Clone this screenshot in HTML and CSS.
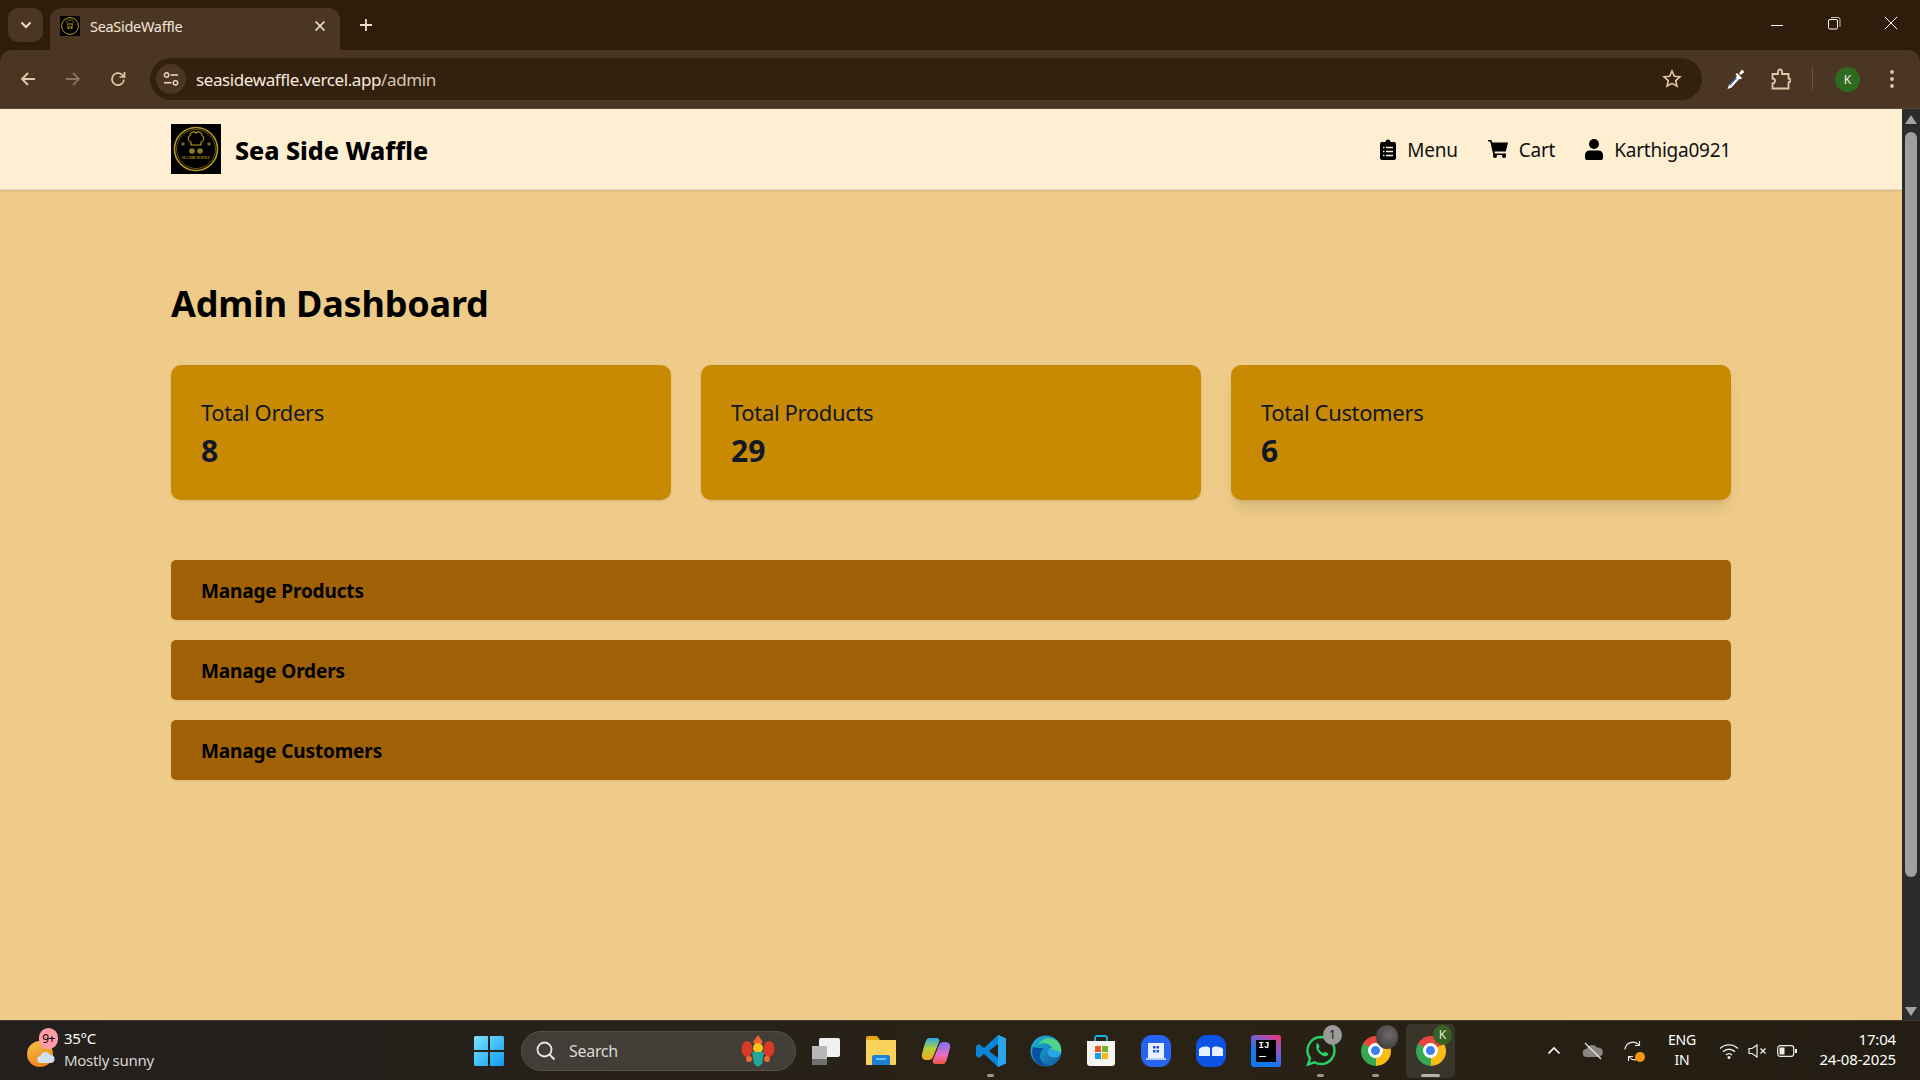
FILE: index.html
```html
<!DOCTYPE html>
<html lang="en">
<head>
<meta charset="utf-8">
<title>SeaSideWaffle</title>
<link rel="stylesheet" href="styles.css">
</head>
<body>
<div class="tabstrip">
  <button class="tab-search"><svg width="12" height="8" viewBox="0 0 12 8"><path d="M1.500 1.500 6 6l4.500-4.500" fill="none" stroke="#f2dfc8" stroke-width="2"/></svg></button>
  <div class="tab">
    <svg class="favicon" viewBox="0 0 50 50"><rect width="50" height="50" fill="#000"/><circle cx="25" cy="25" r="21" fill="none" stroke="#b8991a" stroke-width="2.500"/><path d="M19 20h12v6H19zM17 15a4 4 0 0 1 8-3 4 4 0 0 1 8 3 4 4 0 0 1-2 5H19a4 4 0 0 1-2-5z" fill="none" stroke="#b8991a" stroke-width="1.500"/><circle cx="21" cy="30" r="3" fill="#8d7a1a"/><circle cx="29" cy="30" r="3" fill="#8d7a1a"/></svg>
    <span class="tab-title">SeaSideWaffle</span>
    <svg class="tab-close" width="12" height="12" viewBox="0 0 12 12"><path d="M1.500 1.500l9 9M10.500 1.500l-9 9" stroke="#f2e4d4" stroke-width="1.700"/></svg>
  </div>
  <svg class="tab-new" width="14" height="14" viewBox="0 0 14 14"><path d="M7 1v12M1 7h12" stroke="#f2dfc8" stroke-width="1.800"/></svg>
  <div class="win-controls">
    <svg width="14" height="14" viewBox="0 0 14 14"><path d="M1 9.500h12" stroke="#fff" stroke-width="1"/></svg>
    <svg width="14" height="14" viewBox="0 0 14 14"><rect x="1.500" y="3.500" width="9" height="9.500" rx="1.500" fill="none" stroke="#fff"/><path d="M4 1.500h7a2 2 0 0 1 2 2V11" fill="none" stroke="#c9c2ba"/></svg>
    <svg width="14" height="14" viewBox="0 0 14 14"><path d="M.8.800l12.400 12.400M13.200.800.800 13.200" stroke="#fff" stroke-width="1"/></svg>
  </div>
</div>
<div class="toolbar">
  <svg class="tool" width="18" height="18" viewBox="0 0 18 18"><path d="M16 9H3M9 3 3 9l6 6" fill="none" stroke="#e4c7a8" stroke-width="1.800"/></svg>
  <svg class="tool" width="18" height="18" viewBox="0 0 18 18"><path d="M2 9h13M9 3l6 6-6 6" fill="none" stroke="#8a735c" stroke-width="1.800"/></svg>
  <svg class="tool" width="18" height="18" viewBox="0 0 18 18"><path d="M15 9.500A6 6 0 1 1 13 4.600L15.500 7M15.500 2v5h-5" fill="none" stroke="#e4c7a8" stroke-width="1.700"/></svg>
  <div class="omnibox">
    <span class="site-btn"><svg width="16" height="14" viewBox="0 0 16 14"><circle cx="3.500" cy="3" r="2.200" fill="none" stroke="#f0dcc4" stroke-width="1.400"/><path d="M7.500 3H15M1 10.800h7.500" stroke="#f0dcc4" stroke-width="1.600"/><circle cx="12.500" cy="10.800" r="2.200" fill="none" stroke="#f0dcc4" stroke-width="1.400"/></svg></span>
    <span class="url"><span class="url-host">seasidewaffle.vercel.app</span>/admin</span>
    <svg class="star" width="20" height="20" viewBox="0 0 20 20"><path d="M10 2l2.300 5.300 5.700.5-4.300 3.800 1.300 5.600L10 14.300 5 17.200l1.300-5.600L2 7.800l5.700-.5z" fill="none" stroke="#e4c7a8" stroke-width="1.600"/></svg>
  </div>
  <div class="tool-right">
    <svg width="20" height="22" viewBox="0 0 20 22"><path d="M12 7 3 17l-1.500 4L5.500 19.500l9-10z" fill="#fff"/><path d="M11 10 5.500 16l-2 3 .5-3 5-6.500z" fill="#2d50b4"/><path d="M11 5l5 5-1.500 1.500-5-5zM13 5.500l3-4 2.500 2.500-4 3z" fill="#fff"/></svg>
    <svg width="20" height="22" viewBox="0 0 20 22"><path d="M1.500 6H7V3.500a2 2 0 0 1 4 0V6h6.500v4.500a2 2 0 0 1 0 4V20.500H1.500V15.500a2.500 2.500 0 0 0 0-5z" fill="none" stroke="#e4c7a8" stroke-width="1.800"/></svg>
    <span class="tool-sep"></span>
    <span class="avatar">K</span>
    <svg width="4" height="20" viewBox="0 0 4 20"><circle cx="2" cy="3" r="1.900" fill="#e4c7a8"/><circle cx="2" cy="10" r="1.900" fill="#e4c7a8"/><circle cx="2" cy="17" r="1.900" fill="#e4c7a8"/></svg>
  </div>
</div>

<div class="viewport">
  <div class="page">
    <header class="site-header">
      <div class="brand">
        <svg class="logo" viewBox="0 0 50 50"><rect width="50" height="50" fill="#000"/><circle cx="25" cy="25" r="21.500" fill="none" stroke="#b8991a" stroke-width="1.600"/><circle cx="25" cy="25" r="19.500" fill="none" stroke="#8d7a1a" stroke-width=".7"/><path d="M20 21v-3a3.500 3.500 0 0 1-1-6.500 3.500 3.500 0 0 1 6-2.500 3.500 3.500 0 0 1 6 2.500 3.500 3.500 0 0 1-1 6.500v3z" fill="none" stroke="#b8991a" stroke-width="1.100"/><circle cx="21" cy="27" r="2.800" fill="#8d7a1a"/><circle cx="29" cy="27" r="2.800" fill="#8d7a1a"/><circle cx="12" cy="20" r="1.800" fill="#6e6320"/><circle cx="38" cy="20" r="1.800" fill="#6e6320"/><text x="25" y="35" class="logo-text">SEA SIDE WAFFLE</text></svg>
        <span class="brand-name">Sea Side Waffle</span>
      </div>
      <nav class="nav">
        <a class="nav-link"><svg width="16" height="21" viewBox="0 0 16 21"><path d="M2 3h3.500a2.500 2.500 0 0 1 5 0H14a2 2 0 0 1 2 2v14a2 2 0 0 1-2 2H2a2 2 0 0 1-2-2V5a2 2 0 0 1 2-2z" fill="#000"/><path d="M3 8.500h1.500M6 8.500h7M3 12.500h1.500M6 12.500h7M3 16.500h1.500M6 16.500h7" stroke="#feeed2" stroke-width="1.500"/></svg>Menu</a>
        <a class="nav-link"><svg width="20" height="18" viewBox="0 0 20 18"><path d="M0 0h3.500l.6 2.500H20l-2.200 9H6.500l.4 2H18v1.500H5.300L2.200 1.500H0z" fill="#000"/><circle cx="7" cy="16" r="2" fill="#000"/><circle cx="16" cy="16" r="2" fill="#000"/></svg>Cart</a>
        <a class="nav-link"><svg width="18" height="21" viewBox="0 0 18 21"><circle cx="9" cy="5" r="5" fill="#000"/><path d="M4.500 11.500h9A4.500 4.500 0 0 1 18 16v3a2 2 0 0 1-2 2H2a2 2 0 0 1-2-2v-3a4.500 4.500 0 0 1 4.500-4.500z" fill="#000"/></svg>Karthiga0921</a>
      </nav>
    </header>
    <main class="main">
      <h1 class="title">Admin Dashboard</h1>
      <section class="stats">
        <div class="stat"><div class="stat-label">Total Orders</div><div class="stat-value">8</div></div>
        <div class="stat"><div class="stat-label">Total Products</div><div class="stat-value">29</div></div>
        <div class="stat stat-hover"><div class="stat-label">Total Customers</div><div class="stat-value">6</div></div>
      </section>
      <section class="manage">
        <div class="manage-row">Manage Products</div>
        <div class="manage-row">Manage Orders</div>
        <div class="manage-row">Manage Customers</div>
      </section>
    </main>
  </div>
  <div class="scrollbar">
    <svg class="sb-arrow" width="12" height="9" viewBox="0 0 12 9"><path d="M6 0l6 9H0z" fill="#a3a3a3"/></svg>
    <div class="sb-thumb"></div>
    <svg class="sb-arrow sb-down" width="12" height="9" viewBox="0 0 12 9"><path d="M6 9l6-9H0z" fill="#a3a3a3"/></svg>
  </div>
</div>

<footer class="taskbar">
  <div class="weather">
    <span class="wx-icon">
      <span class="wx-sun"></span>
      <svg class="wx-cloud" width="18" height="12" viewBox="0 0 18 12"><path d="M4 12a3.500 3.500 0 0 1-.5-7A5 5 0 0 1 13 4a4 4 0 0 1 1 8z" fill="#cfe0f2"/></svg>
      <span class="wx-badge">9+</span>
    </span>
    <span class="wx-text"><span class="wx-temp">35°C</span><span class="wx-desc">Mostly sunny</span></span>
  </div>
  <div class="tb-icon"><svg width="30" height="30" viewBox="0 0 30 30"><defs><linearGradient id="win" x1="0" y1="0" x2="1" y2="1"><stop offset="0" stop-color="#7ce3ff"/><stop offset="1" stop-color="#0d9bf5"/></linearGradient></defs><path d="M0 1.500A1.500 1.500 0 0 1 1.500 0H14v14H0zM16 0h12.500A1.500 1.500 0 0 1 30 1.500V14H16zM0 16h14v14H1.500A1.500 1.500 0 0 1 0 28.500zM16 16h14v12.500a1.500 1.500 0 0 1-1.500 1.500H16z" fill="url(#win)"/></svg></div>
  <div class="search">
    <svg width="22" height="22" viewBox="0 0 22 22"><circle cx="9.500" cy="9.500" r="7" fill="none" stroke="#e8e8e8" stroke-width="1.800"/><path d="M14.500 14.500l5 5" stroke="#e8e8e8" stroke-width="2"/></svg>
    <span class="search-text">Search</span>
    <svg class="search-art" width="36" height="32" viewBox="0 0 36 32"><path d="M18 0l5 7-5 5-5-5z" fill="#f0662a"/><ellipse cx="7" cy="14" rx="5.500" ry="8" fill="#d93a25"/><ellipse cx="29" cy="14" rx="5.500" ry="8" fill="#d93a25"/><circle cx="18" cy="13" r="5" fill="#f5c31c"/><path d="M12 17h12l-2 12-4 3-4-3z" fill="#21a69a"/><circle cx="9" cy="24" r="3" fill="#ef6a2c"/><circle cx="27" cy="24" r="3" fill="#ef6a2c"/></svg>
  </div>
  <div class="tb-icon"><svg width="30" height="28" viewBox="0 0 30 28"><rect x="8" y="1" width="21" height="19" rx="2" fill="#f1f1f1"/><rect x="1" y="9" width="15" height="13" fill="#b8b8b8"/><rect x="1" y="22" width="15" height="6" fill="#6f6f6f"/></svg></div>
  <div class="tb-icon"><svg width="32" height="30" viewBox="0 0 32 30"><path d="M1 2a2 2 0 0 1 2-2h9l3 4h-14z" fill="#e5a50c"/><path d="M1 4h30v24a1 1 0 0 1-1 1H2a1 1 0 0 1-1-1z" fill="#fbd35c"/><path d="M7 21a2 2 0 0 1 2-2h14a2 2 0 0 1 2 2v8H7z" fill="#1a80d6"/><path d="M11 23h10" stroke="#8fd0f8" stroke-width="1.600"/></svg></div>
  <div class="tb-icon"><svg width="30" height="30" viewBox="0 0 30 30"><defs><linearGradient id="cp1" x1="0" y1="0" x2="0" y2="1"><stop offset="0" stop-color="#2aa7e8"/><stop offset=".5" stop-color="#b6d233"/><stop offset="1" stop-color="#f5a623"/></linearGradient><linearGradient id="cp2" x1="0" y1="0" x2="0" y2="1"><stop offset="0" stop-color="#7d6ff2"/><stop offset=".6" stop-color="#e86fc1"/><stop offset="1" stop-color="#f2553d"/></linearGradient></defs><path d="M8 2h7c3 0 4 2 3 4l-6 15c-1 2-2 3-4 3H5c-3 0-5-3-4-6l3-11C5 4 6 2 8 2z" fill="url(#cp1)"/><path d="M22 28h-7c-3 0-4-2-3-4l6-15c1-2 2-3 4-3h3c3 0 5 3 4 6l-3 11c-1 3-2 5-4 5z" fill="url(#cp2)"/></svg></div>
  <div class="tb-icon tb-open"><svg width="30" height="32" viewBox="0 0 30 32"><path d="M22 0l8 3.500v25L22 32 8 19l-5 4-3-2v-10l3-2 5 4zM22 9 13 16l9 7z" fill="#0a84d4"/><path d="M22 0l8 3.500v25L22 32z" fill="#2aa4ea"/></svg></div>
  <div class="tb-icon"><svg width="32" height="32" viewBox="0 0 32 32"><defs><linearGradient id="edg" x1="0" y1="0" x2="1" y2="1"><stop offset="0" stop-color="#1fb9d4"/><stop offset="1" stop-color="#0f58a8"/></linearGradient></defs><circle cx="16" cy="16" r="15.500" fill="url(#edg)"/><path d="M31 18c-2 5-8 5-11 3-4-3-2-8 2-8-2-5-9-6-14-3 4-7 12-9 18-5 4 3 6 8 5 13z" fill="#4fd28a"/><path d="M31 18c-2 5-8 5-11 3-3-2-3-5-1-7 4 0 7 1 12 4z" fill="#2aa4ea"/><path d="M3 12c-3 9 3 19 13 19 2 0 4-.5 5-1-6 1-11-3-11-9 0-3 1-6 4-8-4 0-8 0-11-1z" fill="#0b4f9f"/></svg></div>
  <div class="tb-icon"><svg width="30" height="32" viewBox="0 0 30 32"><path d="M9 7V3a2 2 0 0 1 2-2h8a2 2 0 0 1 2 2v4" fill="none" stroke="#1db1e6" stroke-width="1.800"/><path d="M1 6h28v22a3 3 0 0 1-3 3H4a3 3 0 0 1-3-3z" fill="#f6f4f1"/><rect x="9" y="11" width="6" height="6" fill="#e9582b"/><rect x="16" y="11" width="6" height="6" fill="#72b52c"/><rect x="9" y="18" width="6" height="6" fill="#1d9ce6"/><rect x="16" y="18" width="6" height="6" fill="#f6b90e"/></svg></div>
  <div class="tb-icon"><svg width="30" height="32" viewBox="0 0 30 32"><rect width="30" height="32" rx="11" fill="#2563f0"/><path d="M7 8h16v15H7z" fill="#e8f0ff"/><path d="M5 24h20" stroke="#e8f0ff" stroke-width="1.500"/><g fill="#1d50d8"><rect x="12" y="11" width="2.500" height="2.500"/><rect x="15.500" y="11" width="2.500" height="2.500"/><rect x="12" y="15" width="2.500" height="2.500"/><rect x="15.500" y="15" width="2.500" height="2.500"/></g></svg></div>
  <div class="tb-icon"><svg width="30" height="32" viewBox="0 0 30 32"><rect width="30" height="32" rx="11" fill="#0c54e6"/><path d="M3 14c4-3 8-3 11-1v8H3zM16 13c3-2 7-2 11 1v7H16z" fill="#e8f0ff"/></svg></div>
  <div class="tb-icon"><span class="ij"><span class="ij-box"><span class="ij-text">IJ</span><span class="ij-line"></span></span></span></div>
  <div class="tb-icon tb-open">
    <svg width="30" height="32" viewBox="0 0 30 32"><path d="M15 2a13.500 13.500 0 0 1 0 27c-2.500 0-4.500-.6-6.500-1.700L2 29.500l2-6.200A13.500 13.500 0 0 1 15 2z" fill="none" stroke="#25d366" stroke-width="2.400"/><path d="M10 9c1-1 2-1 2.500 0l1 2.500c.2.700-.8 1.500-1 2 .8 2 2.500 3.700 4.500 4.500.500-.3 1.300-1.300 2-1l2.500 1c1 .5 1 1.500 0 2.500-3 3-13.500-3.500-11-11.500z" fill="#25d366"/></svg>
    <span class="tb-badge tb-badge-gray">1</span>
  </div>
  <div class="tb-icon tb-open">
    <span class="chrome"><span class="chrome-eye"></span></span>
    <span class="tb-badge tb-badge-dark"></span>
  </div>
  <div class="tb-icon tb-active">
    <span class="chrome"><span class="chrome-eye"></span></span>
    <span class="tb-badge tb-badge-green">K</span>
  </div>
  <div class="tray">
    <svg width="14" height="9" viewBox="0 0 14 9"><path d="M1.500 7.500 7 2l5.500 5.500" fill="none" stroke="#fff" stroke-width="1.600"/></svg>
    <svg class="tray-cloud" width="22" height="18" viewBox="0 0 22 18"><path d="M5 15a4 4 0 0 1-.5-8A6 6 0 0 1 15 5.500 4.500 4.500 0 0 1 17 15z" fill="#8a8580"/><path d="M3 1l16 16" stroke="#e9e9e9" stroke-width="1.300"/></svg>
    <span class="tray-sync"><svg width="20" height="20" viewBox="0 0 20 20"><path d="M1 8.500A8 8 0 0 1 15 4M19 12a8 8 0 0 1-14 4" fill="none" stroke="#eee" stroke-width="1.100"/><path d="M15.500 0v4.500H11M4.500 20v-4.500H9" fill="none" stroke="#eee" stroke-width="1.100"/></svg><span class="sync-dot"></span></span>
    <span class="lang"><span>ENG</span><span>IN</span></span>
    <svg class="tray-wifi" width="20" height="16" viewBox="0 0 20 16"><path d="M1 5.500a13 13 0 0 1 18 0M4 8.800a8.500 8.500 0 0 1 12 0M7 12a4 4 0 0 1 6 0" fill="none" stroke="#eee" stroke-width="1.400"/><circle cx="10" cy="14.500" r="1.500" fill="#eee"/></svg>
    <svg class="tray-mute" width="20" height="14" viewBox="0 0 20 14"><path d="M1 4.500h3L9 1v12L4 9.500H1z" fill="none" stroke="#eee" stroke-width="1.200"/><path d="M12.500 4.500l5 5M17.500 4.500l-5 5" stroke="#eee" stroke-width="1.300"/></svg>
    <svg class="tray-batt" width="20" height="12" viewBox="0 0 20 12"><rect x=".7" y=".7" width="16" height="10.600" rx="2.500" fill="none" stroke="#eee" stroke-width="1.200"/><rect x="2.500" y="2.500" width="5" height="7" fill="#eee"/><rect x="18" y="4" width="2" height="4" fill="#eee"/></svg>
    <span class="clock"><span>17:04</span><span>24-08-2025</span></span>
  </div>
</footer>
</body>
</html>
```

FILE: styles.css
```css
* { box-sizing: border-box; }
html, body { margin: 0; height: 100%; }
body {
  width: 1920px;
  height: 1080px;
  overflow: hidden;
  display: flex;
  flex-direction: column;
  font-family: "Noto Sans", "Open Sans", "Liberation Sans", sans-serif;
  color: #000;
  background: #2f1c0a;
}
svg { display: block; flex: none; }

/* browser chrome */
.tabstrip {
  height: 50px;
  flex: none;
  display: flex;
  align-items: flex-start;
  background: #2f1c0a;
  padding: 8px 0 0 8px;
}
.tab-search {
  width: 35px;
  height: 34px;
  border: 0;
  padding: 0;
  border-radius: 10px;
  background: #4b3623;
  display: flex;
  align-items: center;
  justify-content: center;
}
.tab {
  width: 290px;
  height: 42px;
  margin-left: 7px;
  padding: 0 14px 7px 10px;
  display: flex;
  align-items: center;
  background: #4b3623;
  border-radius: 12px 12px 0 0;
}
.favicon { width: 20px; height: 20px; }
.tab-title {
  margin-left: 10px;
  flex: 1;
  font-size: 14.500px;
  letter-spacing: -.3px;
  color: #f3e6d8;
}
.tab-new { margin: 10px 0 0 19px; }
.win-controls {
  margin-left: auto;
  height: 36px;
  display: flex;
  align-items: center;
  gap: 43px;
  padding: 0 22px 7px 0;
}
.toolbar {
  height: 59px;
  flex: none;
  display: flex;
  align-items: center;
  gap: 27px;
  padding: 0 0 0 19px;
  background: #4b3623;
  border-radius: 12px 12px 0 0;
  border-bottom: 1px solid #5b4b3c;
}
.omnibox {
  width: 1552px;
  height: 42px;
  margin-left: -4px;
  display: flex;
  align-items: center;
  padding: 0 4px 0 6px;
  border-radius: 21px;
  background: #33200f;
}
.site-btn {
  width: 30px;
  height: 30px;
  border-radius: 50%;
  background: #4b3623;
  display: flex;
  align-items: center;
  justify-content: center;
}
.url {
  margin-left: 10px;
  flex: 1;
  font-size: 17px;
  letter-spacing: -.4px;
  color: #d8c4ae;
}
.url-host { color: #f7ebdd; }
.star { margin-right: 16px; }
.tool-right {
  display: flex;
  align-items: center;
  margin-left: -3px;
}
.tool-right svg:nth-child(2) { margin-left: 25px; }
.tool-sep {
  width: 1px;
  height: 22px;
  margin: 0 22px 0 21px;
  background: #6b5541;
}
.avatar {
  width: 25px;
  height: 25px;
  border-radius: 50%;
  background: #2f6a21;
  color: #eaf5e6;
  font-size: 12px;
  display: flex;
  align-items: center;
  justify-content: center;
}
.tool-right svg:last-child { margin-left: 30px; }

/* page */
.viewport {
  flex: 1;
  min-height: 0;
  display: flex;
}
.page {
  flex: 1;
  min-width: 0;
  background: #eecb88;
}
.site-header {
  height: 81px;
  padding: 0 171px;
  display: flex;
  align-items: center;
  justify-content: space-between;
  background: #feeed2;
  border-bottom: 1px solid #e3dccd;
  box-shadow: 0 1px 3px rgba(0, 0, 0, .1);
}
.brand { display: flex; align-items: center; gap: 14px; }
.logo { width: 50px; height: 50px; }
.logo-text {
  font-family: "Liberation Serif", serif;
  font-size: 3.200px;
  font-weight: 700;
  fill: #b8991a;
  text-anchor: middle;
}
.brand-name {
  padding-top: 2px;
  font-size: 25px;
  font-weight: 800;
  letter-spacing: 0;
}
.nav { display: flex; align-items: center; gap: 30px; }
.nav-link {
  display: flex;
  align-items: center;
  gap: 11px;
  padding-top: 2px;
  font-size: 19px;
  line-height: 26px;
  letter-spacing: -.23px;
  color: #111;
}
.nav-link svg { margin-top: -2px; }
.main { padding: 94px 171px 0; }
.title {
  margin: 0 0 41px;
  font-size: 36px;
  line-height: 40px;
  font-weight: 700;
  letter-spacing: -.2px;
}
.stats {
  display: grid;
  grid-template-columns: repeat(3, 500px);
  gap: 30px;
}
.stat {
  height: 135px;
  padding: 32px 30px 0;
  border-radius: 10px;
  background: #c98a03;
  color: #111827;
  box-shadow: 0 1px 3px rgba(0, 0, 0, .1);
}
.stat-hover { box-shadow: 0 10px 15px -3px rgba(0, 0, 0, .1), 0 4px 6px -4px rgba(0, 0, 0, .1); }
.stat-label { font-size: 22px; line-height: 30px; letter-spacing: -.35px; }
.stat-value { margin-top: 5px; font-size: 30px; line-height: 38px; font-weight: 700; }
.manage {
  margin-top: 60px;
  display: flex;
  flex-direction: column;
  gap: 20px;
}
.manage-row {
  height: 60px;
  padding: 2px 30px 0;
  display: flex;
  align-items: center;
  border-radius: 5px;
  background: #a16207;
  font-size: 19px;
  font-weight: 700;
  letter-spacing: -.15px;
  box-shadow: 0 1px 2px rgba(0, 0, 0, .08);
}
.scrollbar {
  width: 18px;
  flex: none;
  display: flex;
  flex-direction: column;
  align-items: center;
  padding: 6px 0 4px;
  background: #2c2c2c;
}
.sb-thumb {
  width: 12px;
  height: 745px;
  margin-top: 8px;
  border-radius: 6px;
  background: #9f9f9f;
}
.sb-down { margin-top: auto; }

/* taskbar */
.taskbar {
  height: 60px;
  flex: none;
  display: flex;
  align-items: center;
  color: #fff;
  background: linear-gradient(90deg, #231f1d, #2a2215 60%, #241d13);
  border-top: 1px solid #3e3a34;
}
.weather {
  width: 461px;
  display: flex;
  align-items: center;
  gap: 8px;
  padding-left: 26px;
}
.wx-icon { position: relative; width: 30px; height: 40px; }
.wx-sun {
  position: absolute;
  left: 1px;
  top: 10px;
  width: 26px;
  height: 26px;
  border-radius: 50%;
  background: linear-gradient(160deg, #f2c14a, #ef7a10);
}
.wx-cloud { position: absolute; left: 11px; top: 20px; }
.wx-badge {
  position: absolute;
  left: 13px;
  top: -3px;
  width: 19px;
  height: 21px;
  border-radius: 10px;
  background: #ff9ca8;
  color: #000;
  font-size: 12px;
  line-height: 21px;
  text-align: center;
  letter-spacing: -.5px;
}
.wx-text {
  display: flex;
  flex-direction: column;
  padding-bottom: 3px;
  font-size: 15px;
  line-height: 22px;
  letter-spacing: -.3px;
}
.wx-desc { color: #d8d6d3; }
.tb-icon {
  position: relative;
  width: 55px;
  height: 54px;
  flex: none;
  display: flex;
  align-items: center;
  justify-content: center;
}
.tb-open::after, .tb-active::after {
  content: "";
  position: absolute;
  left: 50%;
  bottom: 1px;
  width: 7px;
  height: 3px;
  margin-left: -3.500px;
  border-radius: 2px;
  background: #9b968f;
}
.tb-active { width: 49px; margin-left: 3px; border-radius: 5px; background: #3a352a; }
.tb-active::after { width: 19px; margin-left: -9.500px; background: #b5b1aa; }
.search {
  width: 275px;
  height: 40px;
  margin: 0 2px 0 5px;
  padding: 0 19px 0 13px;
  flex: none;
  display: flex;
  align-items: center;
  gap: 12px;
  border-radius: 20px;
  background: #423d36;
  border: 1px solid #55504a;
}
.search-text { flex: 1; font-size: 16px; letter-spacing: -.3px; color: #dcdad7; }
.ij {
  width: 30px;
  height: 32px;
  padding: 5px;
  border-radius: 3px;
  background: linear-gradient(215deg, #f2366b 0, #8a56c8 35%, #1278f0 65%);
  display: block;
}
.ij-box {
  display: flex;
  flex-direction: column;
  width: 20px;
  height: 22px;
  padding: 1px 3px;
  background: #000;
}
.ij-text { font-size: 9px; line-height: 11px; font-weight: 700; color: #fff; font-family: "Liberation Mono", monospace; }
.ij-line { width: 7px; height: 1.500px; margin-top: 4px; background: #fff; }
.chrome {
  position: relative;
  width: 30px;
  height: 30px;
  border-radius: 50%;
  background: conic-gradient(from -60deg, #e8453c 0 120deg, #f9bc15 120deg 240deg, #34a853 240deg 360deg);
  display: flex;
  align-items: center;
  justify-content: center;
}
.chrome-eye {
  width: 15px;
  height: 15px;
  border-radius: 50%;
  background: #3b7ff0;
  border: 3px solid #fff;
}
.tb-badge {
  position: absolute;
  top: 1px;
  right: 6px;
  width: 19px;
  height: 20px;
  border-radius: 50%;
  display: flex;
  align-items: center;
  justify-content: center;
  font-size: 12px;
}
.tb-badge-gray { background: #9a9a98; color: #222; }
.tb-badge-dark { width: 22px; height: 24px; right: 5px; background: radial-gradient(circle at 60% 40%, #6d6a68, #333); }
.tb-badge-green { background: #3a6122; color: #dfeccf; right: 3px; }
.tray {
  margin-left: 92px;
  flex: 1;
  display: flex;
  align-items: center;
}
.tray-cloud { margin-left: 21px; }
.tray-sync { position: relative; width: 20px; height: 20px; margin-left: 20px; }
.sync-dot {
  position: absolute;
  right: -1px;
  bottom: -1px;
  width: 10px;
  height: 10px;
  border-radius: 50%;
  background: #f7950e;
}
.lang {
  margin-left: 21px;
  width: 34px;
  padding-bottom: 2px;
  display: flex;
  flex-direction: column;
  align-items: center;
  font-size: 14px;
  line-height: 20px;
  letter-spacing: -.2px;
}
.tray-wifi { margin-left: 20px; }
.tray-mute { margin-left: 9px; }
.tray-batt { margin-left: 9px; }
.clock {
  margin-left: auto;
  margin-right: 24px;
  padding-bottom: 3px;
  display: flex;
  flex-direction: column;
  align-items: flex-end;
  font-size: 15px;
  line-height: 20px;
  letter-spacing: -.17px;
}
```
